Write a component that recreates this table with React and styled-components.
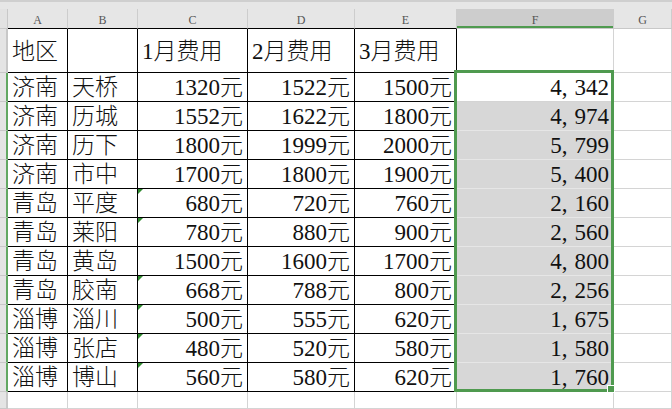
import React from 'react'
import styled, { createGlobalStyle } from 'styled-components'

const GlobalStyle = createGlobalStyle`
  html, body {
    margin: 0;
    padding: 0;
    background: #ffffff;
  }
  body {
    font-family: "Liberation Serif", "Noto Sans CJK SC", serif;
  }
`

const GREEN = '#4f9a4f'
const GRID = '#d4d4d4'

const Sheet = styled.div`
  display: grid;
  grid-template-columns: 8px 60px 70px 110px 107px 102px 157px 1fr;
  grid-template-rows: 9px 20px 44px repeat(11, 29px) 1fr;
  width: 672px;
  height: 409px;
  overflow: hidden;
  background: #fff;
`

const TopStrip = styled.div`
  grid-column: 1 / -1;
  background: #e6e6e6;
  border-top: 2px solid #cfcfcf;
  box-sizing: border-box;
`

const Corner = styled.div`
  background: #e2e2e2;
  border-right: 1px solid #c8c8c8;
  border-bottom: 1px solid #c8c8c8;
  box-sizing: border-box;
`

const ColHead = styled.div`
  display: flex;
  align-items: center;
  justify-content: center;
  box-sizing: border-box;
  padding-top: 3px;
  background: ${(p) => (p.$active ? '#cdcdcd' : '#e6e6e6')};
  border-right: 1px solid #cdcdcd;
  border-bottom: 1px solid ${(p) => (p.$edge === 'black' ? '#000' : '#c8c8c8')};
  box-shadow: ${(p) => (p.$active ? `inset 0 -2px 0 ${GREEN}` : 'none')};
  font-family: "Liberation Serif", serif;
  font-size: 12px;
  color: #555;
`

const RowHead = styled.div`
  box-sizing: border-box;
  background: #e4e4e4;
  border-bottom: 1px solid #c8c8c8;
  border-right: 2px solid ${(p) => (p.$selected ? '#62a862' : '#c8c8c8')};
`

const Cell = styled.div`
  position: relative;
  display: flex;
  align-items: center;
  justify-content: ${(p) => (p.$right ? 'flex-end' : 'flex-start')};
  box-sizing: border-box;
  padding: 1px ${(p) => (p.$right ? '4px' : '0')} 0 ${(p) => (p.$right ? '0' : '4px')};
  background: ${(p) => (p.$fill ? '#d7d7d7' : '#fff')};
  border-right: 1px solid ${(p) => (p.$black ? '#000' : GRID)};
  border-bottom: 1px solid
    ${(p) => (p.$black ? '#000' : p.$fill ? '#e6e6e6' : GRID)};
  font-family: "Liberation Serif", "Noto Sans CJK SC", serif;
  font-size: 23px;
  font-weight: 300;
  color: #111;
  white-space: nowrap;
  line-height: 1;
`

const Comma = styled.span`
  display: inline-block;
  width: 0.55em;
`

const TextFlag = styled.span`
  position: absolute;
  top: 0;
  left: 0;
  width: 0;
  height: 0;
  border-top: 5px solid #2f8a2f;
  border-right: 5px solid transparent;
`

// green frame round F2:F12, hung on the F2 cell
const Selection = styled.div`
  position: absolute;
  z-index: 2;
  top: -3px;
  left: -3px;
  width: 160px;
  height: ${(p) => p.$rows * 29 + 3}px;
  box-sizing: border-box;
  border: 3px solid ${GREEN};
  pointer-events: none;
`

const Handle = styled.span`
  position: absolute;
  right: -4px;
  bottom: -4px;
  width: 6px;
  height: 6px;
  background: ${GREEN};
  border: 1px solid #fff;
`

const columns = ['A', 'B', 'C', 'D', 'E', 'F', 'G']

const rows = [
  ['济南', '天桥', '1320元', '1522元', '1500元', '4,342'],
  ['济南', '历城', '1552元', '1622元', '1800元', '4,974'],
  ['济南', '历下', '1800元', '1999元', '2000元', '5,799'],
  ['济南', '市中', '1700元', '1800元', '1900元', '5,400'],
  ['青岛', '平度', '680元', '720元', '760元', '2,160'],
  ['青岛', '莱阳', '780元', '880元', '900元', '2,560'],
  ['青岛', '黄岛', '1500元', '1600元', '1700元', '4,800'],
  ['青岛', '胶南', '668元', '788元', '800元', '2,256'],
  ['淄博', '淄川', '500元', '555元', '620元', '1,675'],
  ['淄博', '张店', '480元', '520元', '580元', '1,580'],
  ['淄博', '博山', '560元', '580元', '620元', '1,760'],
]

// cells in column C stored as text (green corner mark)
const textRows = [4, 5, 7, 8, 9, 10]

const header = ['地区', '', '1月费用', '2月费用', '3月费用', '']

const Total = ({ value }) => {
  const [head, tail] = value.split(',')
  return (
    <span>
      {head}
      <Comma>,</Comma>
      {tail}
    </span>
  )
}

const App = () => (
  <>
    <GlobalStyle />
    <Sheet>
      <TopStrip />
      <Corner />
      {columns.map((c, i) => (
        <ColHead
          key={c}
          $active={c === 'F'}
          $edge={i < 5 ? 'black' : 'grey'}
        >
          {c}
        </ColHead>
      ))}

      <RowHead />
      {header.map((h, i) => (
        <Cell key={`h-${i}`} $black={i < 5}>
          {h}
        </Cell>
      ))}
      <Cell />

      {rows.map((r, ri) => (
        <React.Fragment key={`r-${ri}`}>
          <RowHead $selected />
          <Cell $black>{r[0]}</Cell>
          <Cell $black>{r[1]}</Cell>
          <Cell $black $right>
            {textRows.includes(ri) && <TextFlag />}
            {r[2]}
          </Cell>
          <Cell $black $right>
            {r[3]}
          </Cell>
          <Cell $black $right>
            {r[4]}
          </Cell>
          <Cell $right $fill={ri > 0}>
            {ri === 0 && (
              <Selection $rows={rows.length}>
                <Handle />
              </Selection>
            )}
            <Total value={r[5]} />
          </Cell>
          <Cell />
        </React.Fragment>
      ))}

      <RowHead />
      {columns.map((c) => (
        <Cell key={`e-${c}`} />
      ))}
    </Sheet>
  </>
)

export default App
